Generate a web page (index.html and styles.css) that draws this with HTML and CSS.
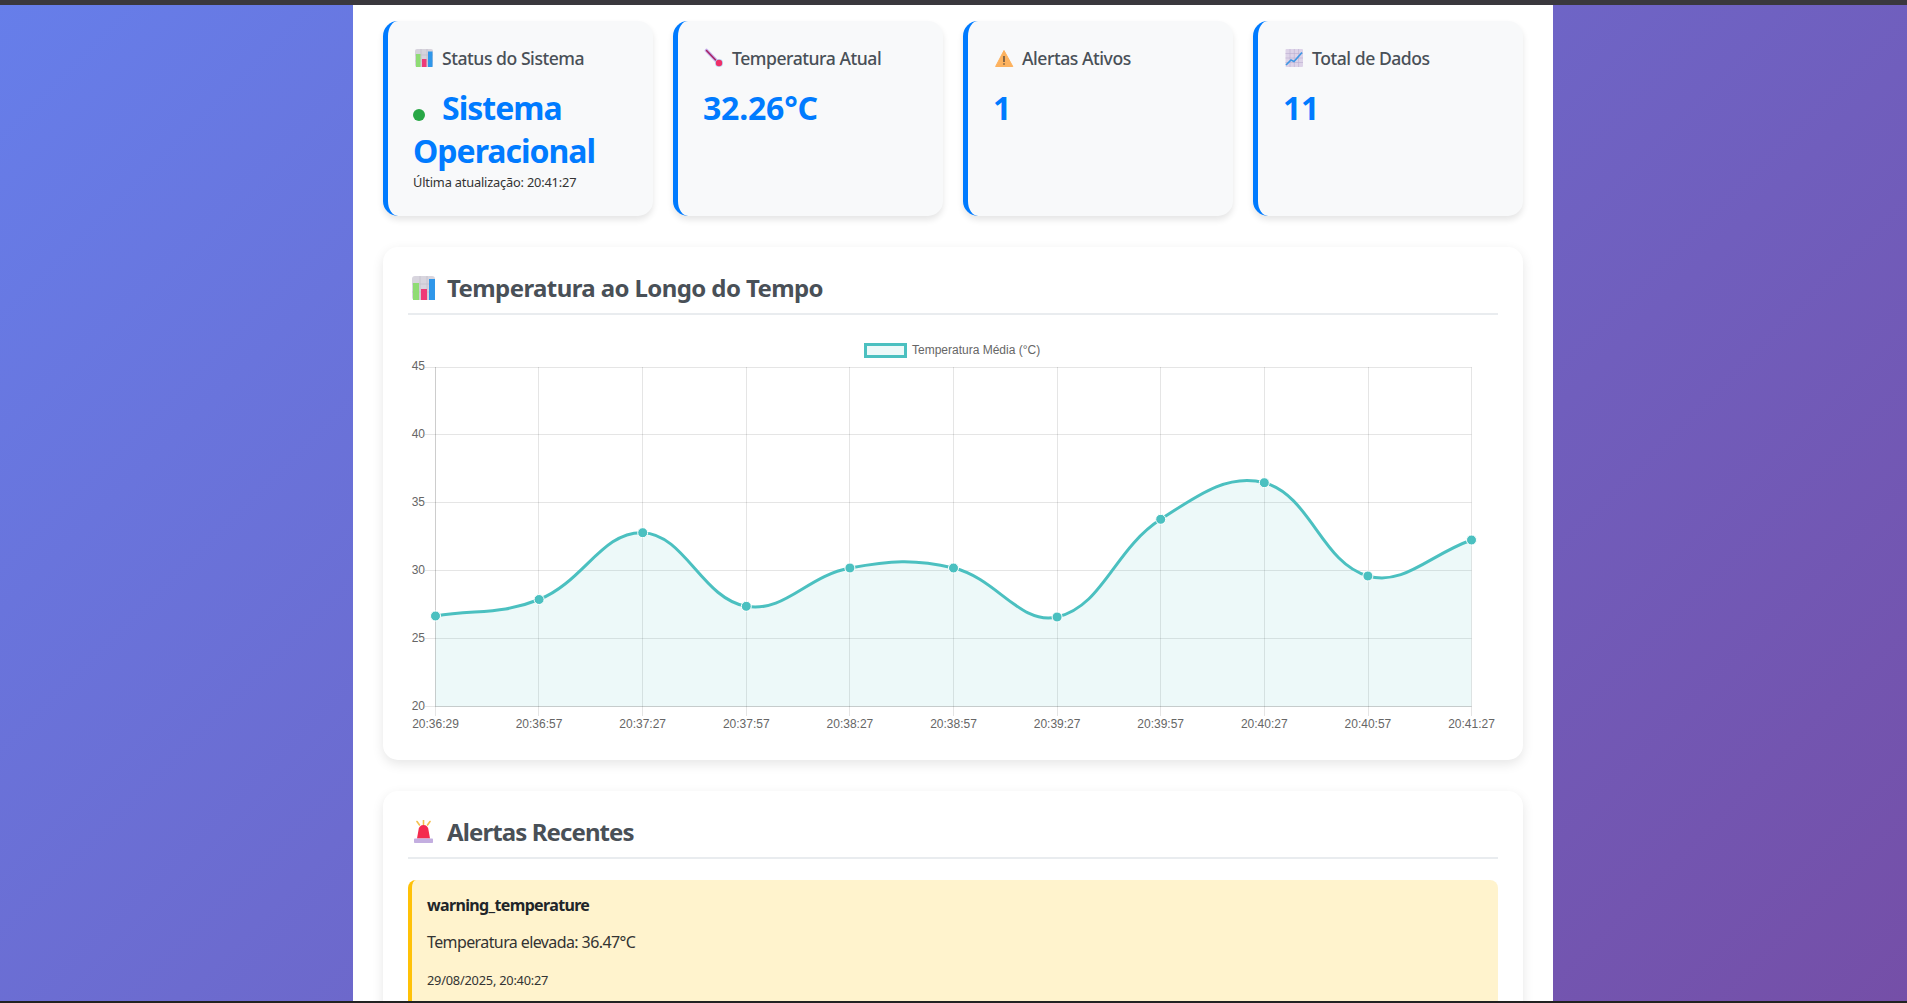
FILE: index.html
```html
<!DOCTYPE html>
<html lang="pt-BR">
<head>
<meta charset="utf-8">
<title>Dashboard de Temperatura</title>
<link rel="stylesheet" href="styles.css">
</head>
<body>
<div class="chrome-top"></div>
<main class="viewport">
  <div class="container">
    <section class="stats">
      <article class="stat">
        <h3 class="stat-title">
          <svg class="stat-icon" viewBox="0 0 22 20"><rect x="2" y="1" width="18" height="18" rx="2" fill="#d6d3dc"/><path d="M2 7h18M2 13h18M8 1v18M14 1v18" stroke="#c1bdc9" stroke-width=".7"/><rect x="3" y="6" width="4.5" height="13" fill="#8fdc74"/><rect x="9" y="11" width="4.5" height="8" fill="#ee3a78"/><rect x="15" y="3.5" width="4.5" height="15.5" fill="#2f97ea"/></svg>Status do Sistema
        </h3>
        <div class="stat-value"><span class="status-dot"></span>Sistema Operacional</div>
        <div class="stat-note">Última atualização: 20:41:27</div>
      </article>
      <article class="stat">
        <h3 class="stat-title">
          <svg class="stat-icon" viewBox="0 0 22 20"><path d="M3.500 2.500 14.500 14" stroke="#c9b4ec" stroke-width="3.600" stroke-linecap="round"/><path d="M3.500 2.500 14.500 14" stroke="#a81f62" stroke-width="1.500" stroke-linecap="round"/><circle cx="16" cy="15" r="4" fill="#b9d4f2"/><circle cx="16" cy="15" r="3.200" fill="#ef2f68"/></svg>Temperatura Atual
        </h3>
        <div class="stat-value stat-value-number">32.26°C</div>
      </article>
      <article class="stat">
        <h3 class="stat-title">
          <svg class="stat-icon" viewBox="0 0 22 20"><path d="M11 2.500 19.800 18.500H2.600Z" fill="#fdb25e" stroke="#fdb25e" stroke-linejoin="round"/><path d="M11 8v6" stroke="#47403a" stroke-width="1.300"/><circle cx="11" cy="16" r=".8" fill="#47403a"/></svg>Alertas Ativos
        </h3>
        <div class="stat-value stat-value-number">1</div>
      </article>
      <article class="stat">
        <h3 class="stat-title">
          <svg class="stat-icon" viewBox="0 0 22 20"><rect x="2.500" y="1" width="17.500" height="18" rx="1" fill="#ddd3e8"/><path d="M2.500 5.500h17.500M2.500 10h17.500M2.500 14.500h17.500M7 1v18M11.300 1v18M15.600 1v18" stroke="#bcaed0" stroke-width=".6"/><path d="M3 17 8 12l3 1.500 8-9" fill="none" stroke="#3f97e4" stroke-width="1.700"/></svg>Total de Dados
        </h3>
        <div class="stat-value stat-value-number">11</div>
      </article>
    </section>

    <section class="panel panel-chart">
      <h2 class="panel-title">
        <svg class="panel-icon" viewBox="0 0 32 24"><rect x="4" y="0" width="23" height="24" rx="3" fill="#d8d5de"/><path d="M4 8h23M4 16h23M12 0v24M19 0v24" stroke="#c4c0cc" stroke-width=".8"/><rect x="5" y="7" width="6" height="17" fill="#8fdc74"/><rect x="13" y="13" width="6" height="11" fill="#ee3a78"/><rect x="21" y="3" width="6" height="21" fill="#2f97ea"/></svg>Temperatura ao Longo do Tempo
      </h2>
      <svg class="chart" viewBox="408 336 1090 400" role="img" aria-label="Temperatura Média ao longo do tempo">
        <rect class="legend-box" x="865.500" y="344.500" width="40" height="12"/>
        <text class="chart-text" x="912" y="354">Temperatura Média (°C)</text>

        <g class="grid">
          <path d="M425 367.500H1471.500M425 434.500H1471.500M425 502.500H1471.500M425 570.500H1471.500M425 638.500H1471.500M425 706.500H1471.500"/>
          <path d="M435.500 367V716M538.500 367V716M642.500 367V716M746.500 367V716M849.500 367V716M953.500 367V716M1057.500 367V716M1160.500 367V716M1264.500 367V716M1368.500 367V716M1471.500 367V716"/>
          <path d="M435.500 367V706.500M435.500 706.500H1471.500"/>
        </g>

        <path class="area" d="M435.500 616C476.900 609.400 501 614.800 539.100 599.500C583.900 581.500 601.900 531.400 642.700 532.700C684.800 534.100 702 598.700 746.300 606.300C784.800 612.900 807.100 575.900 849.900 568C890 560.600 914.100 558.700 953.500 568C997 578.300 1020.100 625.700 1057.100 617C1103 606.200 1113.900 549.600 1160.700 519.300C1196.800 495.900 1227.800 472.700 1264.300 482.700C1310.700 495.400 1321.500 563.200 1367.900 576C1404.400 586.100 1430.100 554.400 1471.500 540V706.500H435.500Z"/>
        <path class="line" d="M435.500 616C476.900 609.400 501 614.800 539.100 599.500C583.900 581.500 601.900 531.400 642.700 532.700C684.800 534.100 702 598.700 746.300 606.300C784.800 612.900 807.100 575.900 849.900 568C890 560.600 914.100 558.700 953.500 568C997 578.300 1020.100 625.700 1057.100 617C1103 606.200 1113.900 549.600 1160.700 519.300C1196.800 495.900 1227.800 472.700 1264.300 482.700C1310.700 495.400 1321.500 563.200 1367.900 576C1404.400 586.100 1430.100 554.400 1471.500 540"/>

        <g class="points">
          <circle cx="435.500" cy="616" r="5"/><circle cx="539.100" cy="599.500" r="5"/><circle cx="642.700" cy="532.700" r="5"/><circle cx="746.300" cy="606.300" r="5"/><circle cx="849.900" cy="568" r="5"/><circle cx="953.500" cy="568" r="5"/><circle cx="1057.100" cy="617" r="5"/><circle cx="1160.700" cy="519.300" r="5"/><circle cx="1264.300" cy="482.700" r="5"/><circle cx="1367.900" cy="576" r="5"/><circle cx="1471.500" cy="540" r="5"/>
        </g>

        <g class="chart-text y-ticks">
          <text x="425" y="370">45</text><text x="425" y="438">40</text><text x="425" y="506">35</text><text x="425" y="574">30</text><text x="425" y="642">25</text><text x="425" y="710">20</text>
        </g>
        <g class="chart-text x-ticks">
          <text x="435.500" y="728">20:36:29</text><text x="539" y="728">20:36:57</text><text x="642.700" y="728">20:37:27</text><text x="746.300" y="728">20:37:57</text><text x="849.900" y="728">20:38:27</text><text x="953.500" y="728">20:38:57</text><text x="1057.100" y="728">20:39:27</text><text x="1160.700" y="728">20:39:57</text><text x="1264.300" y="728">20:40:27</text><text x="1367.900" y="728">20:40:57</text><text x="1471.500" y="728">20:41:27</text>
        </g>
      </svg>
    </section>

    <section class="panel">
      <h2 class="panel-title panel-title-tight">
        <svg class="panel-icon" viewBox="0 0 32 24"><path d="M15.500 0v4.500M9 1.500l2.500 3.500M22 1.500 19.500 5" stroke="#f4c04e" stroke-width="1.600" stroke-linecap="round"/><path d="M9 18.500l1.500-8.500a5 5 0 0 1 10 0l1.500 8.500Z" fill="#f42a4e"/><rect x="6" y="18.500" width="19" height="4.500" rx=".8" fill="#c3aee0"/></svg>Alertas Recentes
      </h2>
      <div class="alert">
        <div class="alert-name">warning_temperature</div>
        <p class="alert-text">Temperatura elevada: 36.47°C</p>
        <p class="alert-time">29/08/2025, 20:40:27</p>
      </div>
    </section>
  </div>
</main>
<div class="chrome-bottom"></div>
</body>
</html>
```
FILE: styles.css
```css
* { box-sizing: border-box; }

html, body { height: 100%; }

body {
  margin: 0;
  display: flex;
  flex-direction: column;
  overflow: hidden;
  background: linear-gradient(135deg, #667eea 0%, #764ba2 108%);
  font-family: "Noto Sans", "Open Sans", sans-serif;
  color: #333;
}

.chrome-top { flex: 0 0 5px; background: #3a383d; }
.chrome-bottom { flex: 0 0 2px; background: #222; }

.viewport { flex: 1 1 0; min-height: 0; overflow: hidden; padding-right: 1px; }

.container {
  width: 1200px;
  margin: 0 auto;
  padding: 16px 30px 30px;
  background: #fff;
}

.stats {
  display: grid;
  grid-template-columns: repeat(4, 1fr);
  gap: 20px;
  margin-bottom: 31px;
}

.stat {
  height: 195px;
  padding: 25px;
  background: #f8f9fa;
  border-left: 5px solid #007bff;
  border-radius: 15px;
  box-shadow: 0 4px 6px rgba(0, 0, 0, .1);
}

.stat-title {
  display: flex;
  align-items: center;
  margin: 0 0 16px;
  height: 24px;
  font-size: 17.6px;
  font-weight: 500;
  line-height: 24px;
  color: #495057;
  letter-spacing: -.47px;
}

.stat-icon { flex: none; width: 22px; height: 20px; margin-right: 7px; }

.stat-value {
  font-size: 32px;
  font-weight: 700;
  line-height: 43px;
  color: #007bff;
  letter-spacing: -1px;
}

.stat-value-number { letter-spacing: -.2px; }

.status-dot {
  display: inline-block;
  width: 12px;
  height: 12px;
  margin-right: 17px;
  border-radius: 50%;
  background: #28a745;
  vertical-align: -1px;
}

.stat-note {
  margin-top: 2px;
  font-size: 12.8px;
  line-height: 17px;
  letter-spacing: -.18px;
  color: #333;
}

.panel {
  margin-bottom: 30px;
  padding: 25px;
  background: #fff;
  border-radius: 15px;
  box-shadow: 0 4px 12px rgba(0, 0, 0, .1);
}

.panel-chart { margin-bottom: 31px; padding-bottom: 24px; }

.panel-title {
  display: flex;
  align-items: center;
  margin: 0 0 21px;
  padding-bottom: 9px;
  border-bottom: 2px solid #e9ecef;
  font-size: 24px;
  font-weight: 700;
  line-height: 32px;
  color: #495057;
  letter-spacing: -.6px;
}

.panel-title-tight { letter-spacing: -.9px; }

.panel-icon { flex: none; width: 32px; height: 24px; margin-right: 7px; }

.chart { display: block; width: 1090px; height: 400px; }

.chart-text { font-family: "Liberation Sans", Arial, sans-serif; font-size: 12px; fill: #666; }
.y-ticks text { text-anchor: end; }
.x-ticks text { text-anchor: middle; }

.legend-box { fill: rgba(75, 192, 192, .1); stroke: #4bc0c0; stroke-width: 3; }
.grid path { fill: none; stroke: rgba(0, 0, 0, .1); stroke-width: 1; }
.area { fill: rgba(75, 192, 192, .1); }
.line { fill: none; stroke: #4bc0c0; stroke-width: 3; }
.points circle { fill: #4bc0c0; stroke: #fff; stroke-width: 1; }

.alert {
  padding: 15px;
  background: #fff3cd;
  border-left: 4px solid #ffc107;
  border-radius: 8px;
  font-size: 16px;
  line-height: 21px;
}

.alert-name { font-weight: 700; color: #212529; letter-spacing: -.65px; }
.alert-text { margin: 16px 0; color: #333; letter-spacing: -.6px; }
.alert-time { margin: 17px 0 16px; font-size: 12.8px; color: #333; letter-spacing: -.22px; }
```
